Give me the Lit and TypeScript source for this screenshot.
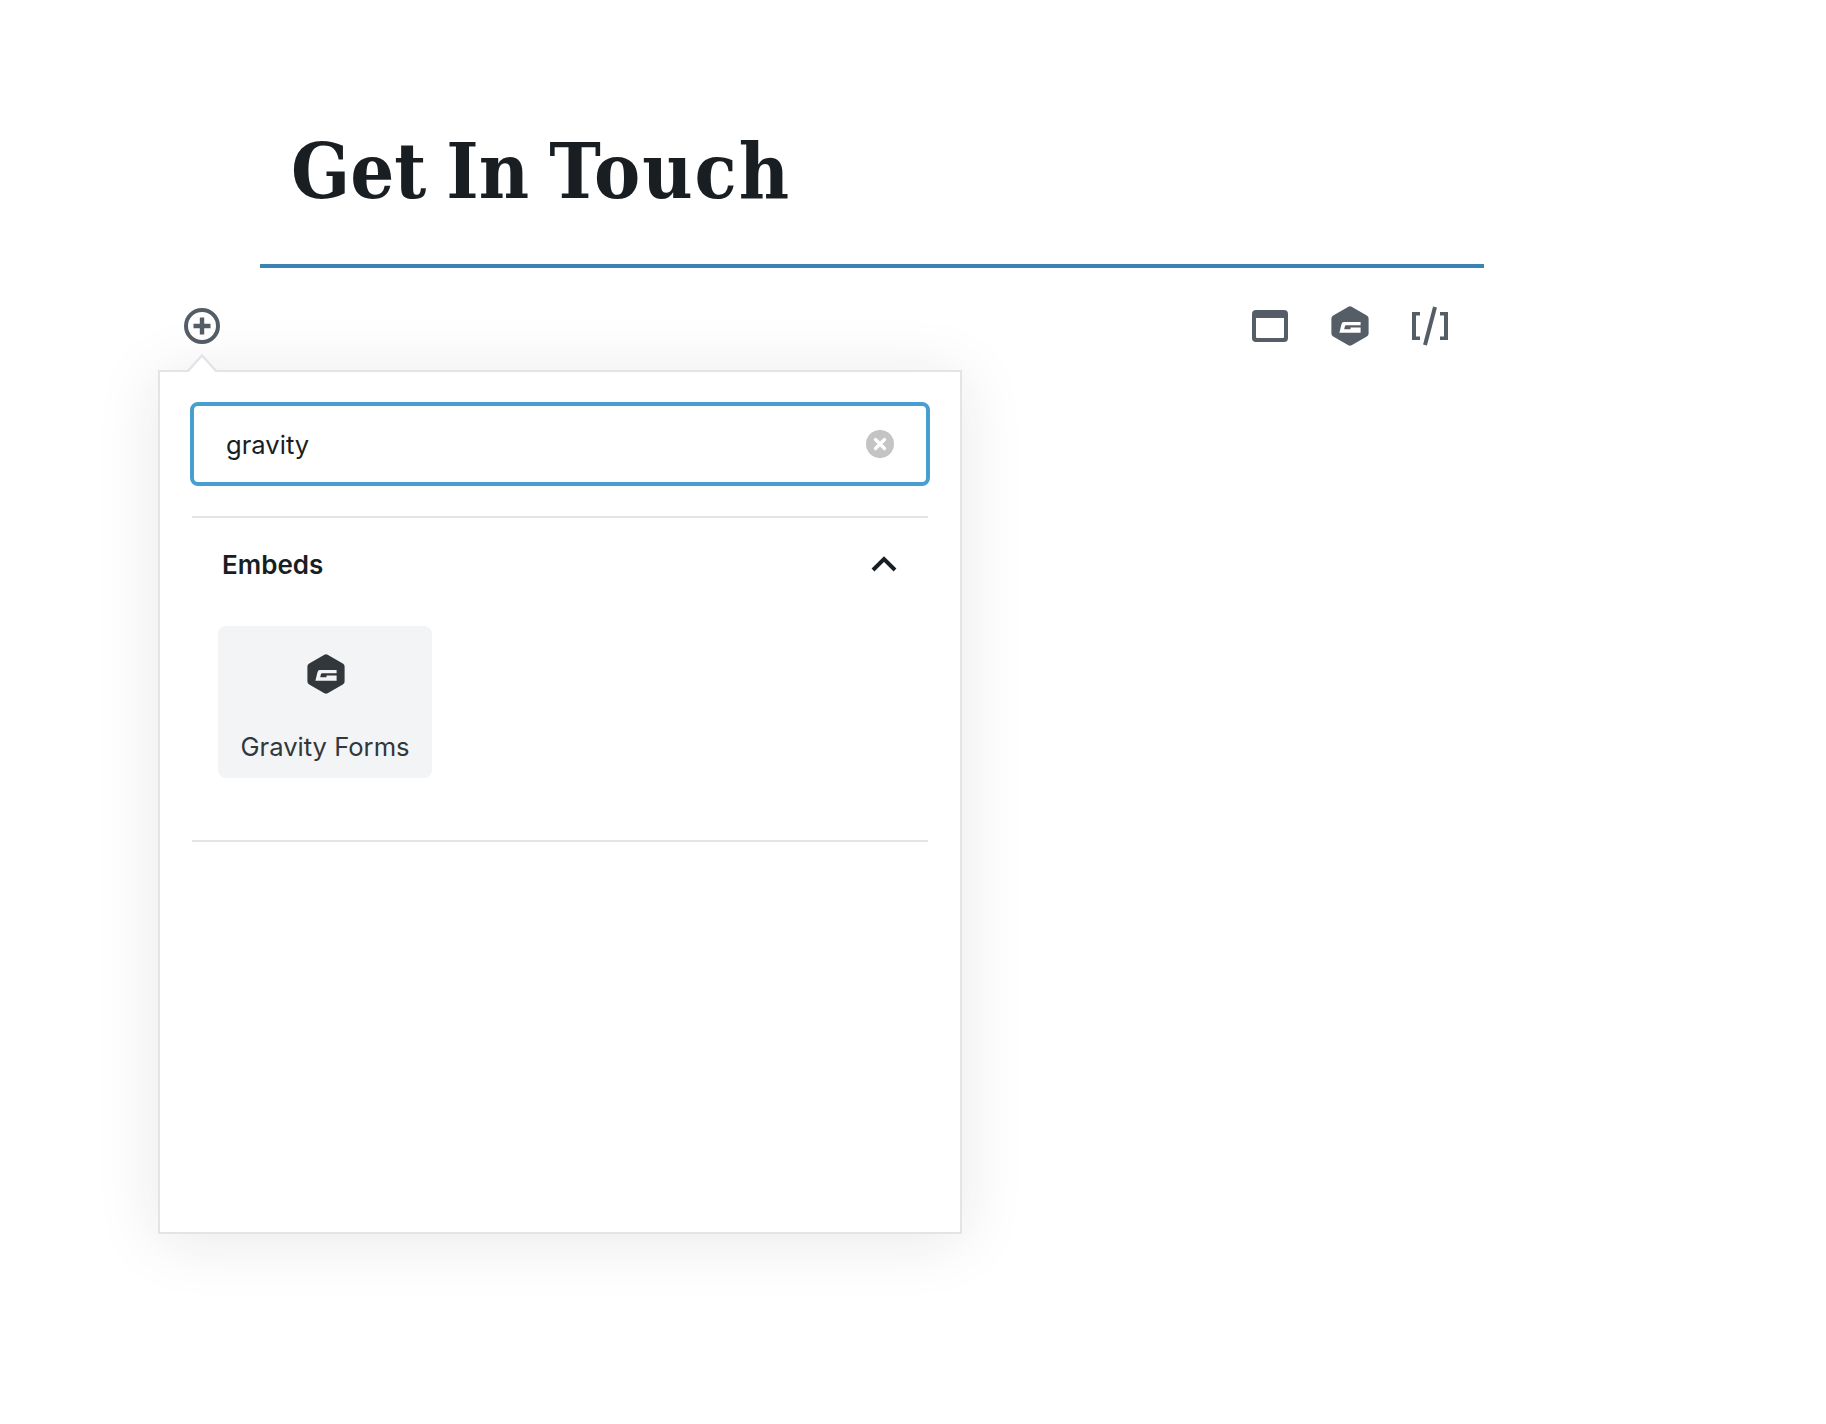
import { LitElement, html, css, svg } from "lit";
import { customElement } from "lit/decorators.js";

const gIcon = svg`<path fill-rule="evenodd" d="M19 .2 Q19.8 .2 20.6 .7 L35.8 9.4 Q37.6 10.5 37.6 12.4 V27.6 Q37.6 29.5 35.8 30.6 L20.6 39.3 Q19 40.1 17.4 39.3 L2.2 30.6 Q.4 29.5 .4 27.6 V12.4 Q.4 10.5 2.2 9.4 L17.4 .7 Q18.2 .2 19 .2 Z M12.8 16 H29.6 V19.2 H15 Q14.2 19.2 13.9 20.2 L13.2 23.2 H19.5 V21.4 H29.6 V26.8 H8.4 L10.4 18.4 Q11 16 12.8 16 Z"/>`;

@customElement("app-root")
export class AppRoot extends LitElement {
  static styles = css`
    :host {
      display: block;
      width: 1826px;
      height: 1424px;
      background: #fff;
      overflow: hidden;
      font-family: Inter, "Noto Sans", sans-serif;
    }
    .page {
      box-sizing: border-box;
      width: 1300px;
      margin-left: 184px;
      padding-top: 118px;
    }
    .title {
      margin: 0 0 0 107px;
      height: 146px;
      font-family: "DejaVu Serif Condensed", "DejaVu Serif", serif;
      font-stretch: condensed;
      font-weight: 700;
      font-size: 77px;
      line-height: 106px;
      word-spacing: -4px;
      color: #191e23;
    }
    .title .last {
      letter-spacing: 2px;
    }
    .rule {
      height: 4px;
      margin-left: 76px;
      background: #3a82b8;
    }
    .toolbar {
      display: flex;
      justify-content: space-between;
      align-items: center;
      margin-top: 38px;
      padding-right: 36px;
      height: 40px;
    }
    .inserter {
      position: relative;
      width: 36px;
      height: 36px;
    }
    .inserter svg,
    .tools svg {
      display: block;
    }
    .tools {
      display: flex;
      align-items: center;
      gap: 43px;
      fill: #555d66;
    }
    .popover {
      position: absolute;
      z-index: 2;
      left: -26px;
      top: 62px;
      box-sizing: border-box;
      width: 804px;
      height: 864px;
      padding: 30px 30px 0;
      background: #fff;
      border: 2px solid #e2e4e7;
      box-shadow: 0 6px 60px rgba(25, 30, 35, 0.1);
    }
    .arrow {
      position: absolute;
      left: 26px;
      top: -18px;
    }
    .search {
      box-sizing: border-box;
      display: flex;
      align-items: center;
      justify-content: space-between;
      height: 84px;
      padding: 0 32px;
      border: 4px solid #469fd0;
      border-radius: 8px;
      font-size: 25.6px;
      color: #191e23;
    }
    .search svg {
      display: block;
    }
    .section {
      margin: 30px 2px 0;
      border-top: 2px solid #e2e4e7;
      border-bottom: 2px solid #e2e4e7;
      height: 322px;
    }
    .section-head {
      display: flex;
      align-items: center;
      justify-content: space-between;
      height: 80px;
      margin-top: 6px;
      padding: 0 31px 0 30px;
      font-size: 26px;
      font-weight: 600;
      color: #191e23;
    }
    .section-head svg {
      display: block;
    }
    .card {
      box-sizing: border-box;
      display: flex;
      flex-direction: column;
      align-items: center;
      width: 214px;
      height: 152px;
      margin: 22px 0 0 26px;
      padding-top: 28px;
      border-radius: 8px;
      background: #f3f4f5;
      color: #32373c;
      font-size: 25.6px;
      line-height: 34px;
      fill: #32373c;
    }
    .card svg {
      display: block;
      margin: 0 0 36px 2px;
    }
  `;

  render() {
    return html`
      <div class="page">
        <h1 class="title">Get In <span class="last">Touch</span></h1>
        <div class="rule"></div>
        <div class="toolbar">
          <div class="inserter">
            <svg width="36" height="36" viewBox="0 0 36 36" fill="none" stroke="#555d66">
              <circle cx="18" cy="18" r="16" stroke-width="4" />
              <path d="M18 9.5v17M9.5 18h17" stroke-width="4.4" />
            </svg>
            <div class="popover">
              <svg class="arrow" width="32" height="18" viewBox="0 0 32 18">
                <path d="M1 18 L16 1.4 L31 18" fill="#fff" stroke="#e2e4e7" stroke-width="2.4" />
              </svg>
              <div class="search">
                <span>gravity</span>
                <svg width="28" height="28" viewBox="0 0 28 28">
                  <circle cx="14" cy="14" r="14" fill="#c4c4c4" />
                  <path d="M9.5 9.5l9 9M18.5 9.5l-9 9" stroke="#fff" stroke-width="3.4" stroke-linecap="round" />
                </svg>
              </div>
              <div class="section">
                <div class="section-head">
                  <span>Embeds</span>
                  <svg width="26" height="16" viewBox="0 0 26 16" fill="none" stroke="#191e23" stroke-width="4">
                    <path d="M2 14 L13 3 L24 14" />
                  </svg>
                </div>
                <div class="card">
                  <svg width="38" height="40" viewBox="0 0 38 40">${gIcon}</svg>
                  <span>Gravity Forms</span>
                </div>
              </div>
            </div>
          </div>
          <div class="tools">
            <svg width="36" height="32" viewBox="0 0 36 32">
              <path fill-rule="evenodd" d="M4 0 H32 Q36 0 36 4 V28 Q36 32 32 32 H4 Q0 32 0 28 V4 Q0 0 4 0 Z M4 8 V27 Q4 28 5 28 H31 Q32 28 32 27 V8 Z" />
            </svg>
            <svg width="38" height="40" viewBox="0 0 38 40">${gIcon}</svg>
            <svg width="36" height="40" viewBox="0 0 36 40">
              <path d="M0 6 H8 V9.5 H4 V30.5 H8 V34 H0 Z M36 6 H28 V9.5 H32 V30.5 H28 V34 H36 Z" />
              <path d="M23 1 L13 39" fill="none" stroke="#555d66" stroke-width="4" />
            </svg>
          </div>
        </div>
      </div>
    `;
  }
}
